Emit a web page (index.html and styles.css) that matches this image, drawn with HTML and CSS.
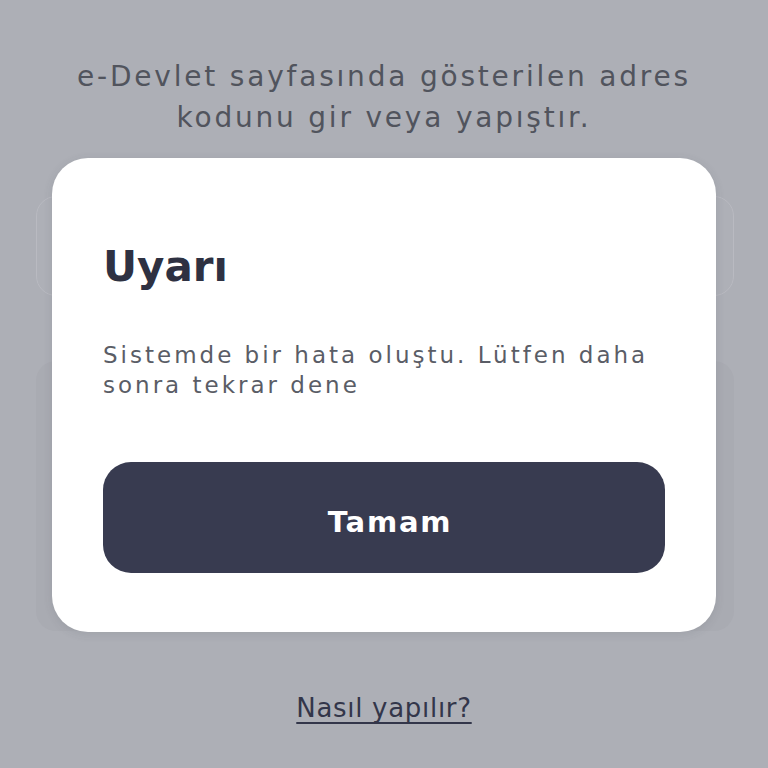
FILE: index.html
```html
<!DOCTYPE html>
<html lang="tr">
<head>
<meta charset="utf-8">
<title>Adres kodu</title>
<link rel="stylesheet" href="styles.css">
</head>
<body>
<main class="screen">
  <p class="intro">e-Devlet sayfasında gösterilen adres<br>kodunu gir veya yapıştır.</p>

  <div class="form">
    <div class="field"></div>
    <div class="panel"></div>
  </div>

  <a class="help" href="#">Nasıl yapılır?</a>

  <div class="dialog" role="alertdialog" aria-labelledby="dlg-title">
    <h2 class="dialog-title" id="dlg-title">Uyarı</h2>
    <p class="dialog-text">Sistemde bir hata oluştu. Lütfen daha<br>sonra tekrar dene</p>
    <button class="dialog-btn" type="button">Tamam</button>
  </div>
</main>
</body>
</html>
```

FILE: styles.css
```css
* { box-sizing: border-box; }

html, body {
  margin: 0;
  height: 100%;
}

body {
  background: #adafb6;
  font-family: "DejaVu Sans", "Noto Sans", sans-serif;
  color: #33364a;
}

.screen {
  position: relative;
  height: 768px;
  display: flex;
  flex-direction: column;
  align-items: stretch;
  padding-top: 56px;
}

.intro {
  margin: 0;
  text-align: center;
  font-size: 28px;
  line-height: 41px;
  letter-spacing: 2.8px;
  color: #51545d;
}

.form {
  margin: 0 34px 0 36px;
  padding-top: 58px;
  display: flex;
  flex-direction: column;
  gap: 65px;
}

.field {
  height: 100px;
  border-radius: 20px;
  border: 1.5px solid #b9bac1;
  background: #aeb0b7;
}

.panel {
  height: 270px;
  border-radius: 20px;
  background: #a9abb2;
}

.help {
  align-self: center;
  margin-top: 62px;
  font-size: 26px;
  font-weight: 500;
  letter-spacing: 0.7px;
  color: #33364a;
  text-decoration: underline;
  text-decoration-thickness: 2px;
  text-underline-offset: 5px;
}

/* alert dialog over the form */
.dialog {
  position: absolute;
  top: 158px;
  left: 52px;
  width: 664px;
  height: 474px;
  background: #ffffff;
  border-radius: 36px;
  padding: 81px 51px 0 51px;
  box-shadow: 0 2px 10px rgba(60, 62, 72, 0.12);
}

.dialog-title {
  margin: 0;
  font-size: 42px;
  line-height: 56px;
  font-weight: 700;
  color: #2e3142;
}

.dialog-text {
  margin: 45px 0 0;
  font-size: 23px;
  line-height: 30px;
  letter-spacing: 3px;
  color: #5a5d66;
}

.dialog-btn {
  display: block;
  width: 100%;
  height: 111px;
  margin-top: 62px;
  padding: 8px 0 0 12px;
  border: 0;
  border-radius: 28px;
  background: #383b50;
  color: #ffffff;
  font-family: inherit;
  font-size: 29px;
  font-weight: 700;
  letter-spacing: 1.8px;
}
```
